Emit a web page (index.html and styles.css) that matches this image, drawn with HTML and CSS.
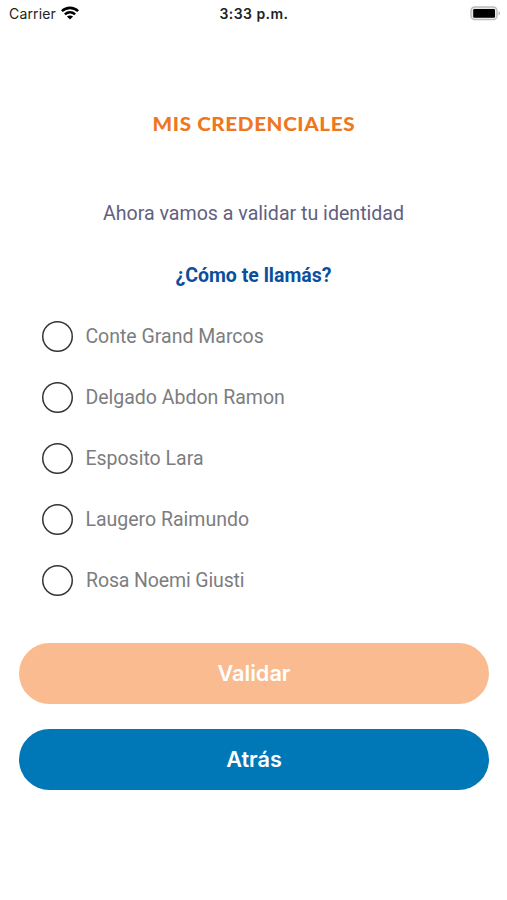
FILE: index.html
```html
<!DOCTYPE html>
<html lang="es">
<head>
<meta charset="utf-8">
<title>Mis credenciales</title>
<link rel="stylesheet" href="styles.css">
</head>
<body>
<header class="status">
  <div class="carrier"><span>Carrier</span>
    <svg class="wifi" viewBox="0 0 18 14" width="18" height="14" fill="none" stroke="#000" stroke-width="2.6">
      <path d="M.9 5.1C5.5.8 12.5.8 17.1 5.1M3.9 8.4c3-2.7 7.2-2.7 10.2 0"/>
      <path d="M9 13.6 5.9 10.6c1.7-1.4 4.5-1.4 6.2 0z" fill="#000" stroke="none"/>
    </svg>
  </div>
  <div class="time">3:33 p.m.</div>
  <svg class="battery" viewBox="0 0 31 15" width="31" height="15">
    <rect x="1" y="1" width="26" height="12.6" rx="3.8" fill="#e8e8e8" stroke="#bcbcbc" stroke-width="1.4"/>
    <rect x="3.2" y="3" width="21.8" height="8.8" rx="1.2" fill="#000"/>
    <path d="M28.6 5.2c1.8.7 1.8 3.5 0 4.2z" fill="#aaa"/>
  </svg>
</header>
<main>
  <h1 class="title">MIS CREDENCIALES</h1>
  <p class="intro">Ahora vamos a validar tu identidad</p>
  <h2 class="question">¿Cómo te llamás?</h2>
  <div class="options" role="radiogroup">
    <label class="option"><input type="radio" name="nombre"><span>Conte Grand Marcos</span></label>
    <label class="option"><input type="radio" name="nombre"><span>Delgado Abdon Ramon</span></label>
    <label class="option"><input type="radio" name="nombre"><span>Esposito Lara</span></label>
    <label class="option"><input type="radio" name="nombre"><span>Laugero Raimundo</span></label>
    <label class="option last"><input type="radio" name="nombre"><span>Rosa Noemi Giusti</span></label>
  </div>
  <div class="actions">
    <button class="button validate">Validar</button>
    <button class="button back">Atrás</button>
  </div>
</main>
</body>
</html>
```
FILE: styles.css
```css
* { box-sizing: border-box; }
body { margin: 0; background: #fff; font-family: Roboto, sans-serif; }
.status {
  display: grid;
  grid-template-columns: 1fr auto 1fr;
  align-items: center;
  height: 27px;
  padding: 0 6px 0 9px;
  font-family: Inter, sans-serif;
  font-size: 14px;
  color: #222;
}
.carrier { display: flex; align-items: center; gap: 6px; letter-spacing: .15px; }
.wifi { margin: -1px 0 0 -1px; }
.time { padding-right: 2px; font-weight: 600; letter-spacing: .45px; }
.battery { justify-self: end; }
main { display: flex; flex-direction: column; }
.title, .intro, .question { margin: 0; text-align: center; line-height: 24px; }
.title { align-self: center; margin-top: 85px; font: 900 18.5px/24px Lato, sans-serif; letter-spacing: .55px; color: #ee771f; transform: scaleX(1.115); }
.intro { margin-top: 66px; font-size: 19.6px; color: #62607f; }
.question { margin-top: 38px; font-size: 19.5px; font-weight: 700; color: #0b4f9c; }
.options { margin-top: 17.5px; padding-left: 42px; }
.option { display: flex; align-items: center; gap: 12.4px; height: 61px; font-size: 19.5px; color: #7c7d80; }
.option.last { gap: 13px; letter-spacing: -.13px; }
.option.last span { padding-top: 1px; }
.option input { appearance: none; width: 31px; height: 31px; margin: 0; border-radius: 50%; box-shadow: inset 0 0 0 1.5px #333; }
.actions { display: grid; gap: 25px; margin-top: 32px; padding: 0 18px 0 19px; }
.button { height: 61px; border: 0; border-radius: 31px; color: #fff; font: 600 21.7px Inter, sans-serif; }
.validate { background: #f9bb8f; }
.back { background: #0077b6; }
```
